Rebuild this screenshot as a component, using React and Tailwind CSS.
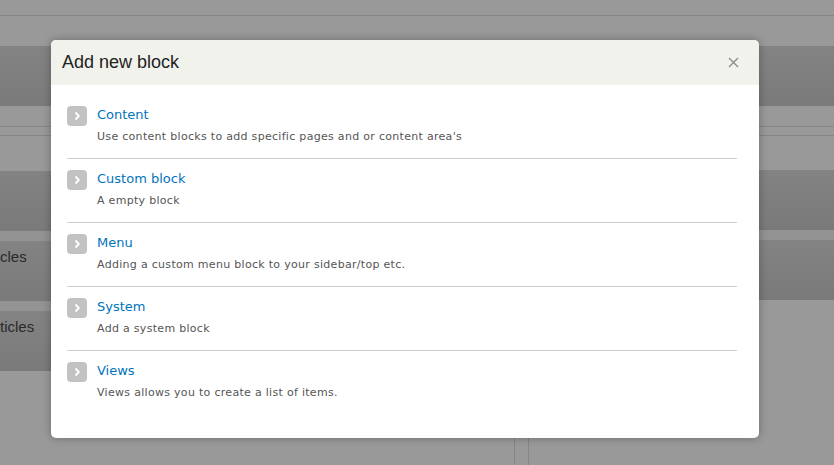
import React from "react";

const items = [
  { title: "Content", desc: "Use content blocks to add specific pages and or content area's" },
  { title: "Custom block", desc: "A empty block" },
  { title: "Menu", desc: "Adding a custom menu block to your sidebar/top etc." },
  { title: "System", desc: "Add a system block" },
  { title: "Views", desc: "Views allows you to create a list of items." },
];

function Chevron() {
  return (
    <div className="w-5 h-5 rounded-[4px] bg-[#c2c2c2] flex items-center justify-center shrink-0">
      <svg width="8" height="10" viewBox="0 0 8 10">
        <path d="M2.5 1.5 L5.8 5 L2.5 8.5" fill="none" stroke="#ffffff" strokeWidth="1.9" />
      </svg>
    </div>
  );
}

export default function App() {
  return (
    <div className="relative w-[834px] h-[465px] overflow-hidden bg-[#999999] font-['Liberation_Sans',Arial,sans-serif]">
      {/* background page */}
      <div className="flex flex-col">
        <div className="h-[16px] border-b border-[#878787]" />
        <div className="h-[30px]" />
        <div className="h-[60px] bg-gradient-to-b from-[#838383] to-[#7a7a7a]" />
        <div className="h-[21px] border-b border-[#868686]" />
        <div className="h-[9px] border-b border-[#868686]" />
        <div className="flex">
          <div className="w-[515px] flex flex-col border-r border-[#868686]">
            <div className="h-[35px]" />
            <div className="h-[60px] bg-gradient-to-b from-[#838383] to-[#7a7a7a]" />
            <div className="h-[10px] bg-[#939393]" />
            <div className="h-[60px] bg-gradient-to-b from-[#838383] to-[#7a7a7a] pt-[5px]">
              <div className="text-[15px] text-[#2a2a2a]">cles</div>
            </div>
            <div className="h-[10px] bg-[#939393]" />
            <div className="h-[60px] bg-gradient-to-b from-[#838383] to-[#7a7a7a] pt-[5px]">
              <div className="text-[15px] text-[#2a2a2a]">ticles</div>
            </div>
            <div className="h-[200px]" />
          </div>
          <div className="w-[13px]" />
          <div className="flex-1 flex flex-col border-l border-[#868686]">
            <div className="h-[34px]" />
            <div className="h-[60px] bg-gradient-to-b from-[#838383] to-[#7a7a7a]" />
            <div className="h-[10px] bg-[#939393]" />
            <div className="h-[60px] bg-gradient-to-b from-[#838383] to-[#7a7a7a]" />
            <div className="h-[200px]" />
          </div>
        </div>
      </div>

      {/* modal */}
      <div className="absolute left-[51px] top-[40px] w-[708px] h-[398px] bg-white rounded-[5px] shadow-[0_0_8px_rgba(0,0,0,0.3)] overflow-hidden flex flex-col">
        <div className="h-[45px] bg-[#f2f2ec] flex items-center justify-between pl-[11px] pr-[20px]">
          <div className="text-[18px] text-[#222222] leading-none -mt-[2px]">Add new block</div>
          <svg width="11" height="11" viewBox="0 0 11 11">
            <path d="M1 1 L10 10 M10 1 L1 10" stroke="#8a8a8a" strokeWidth="1.3" />
          </svg>
        </div>
        <div className="pt-[10px] pl-[16px] pr-[22px] font-['DejaVu_Sans',Verdana,sans-serif]">
          {items.map((it, i) => (
            <div
              key={it.title}
              className={`flex gap-[10px] pt-[11px] pb-[12px] ${i < items.length - 1 ? "border-b border-[#cccccc]" : ""}`}
            >
              <Chevron />
              <div className="flex flex-col gap-[4px]">
                <div className="text-[13px] leading-[18px] text-[#0074bd]">{it.title}</div>
                <div className="text-[11px] leading-[18px] text-[#555555] tracking-[0.3px]">{it.desc}</div>
              </div>
            </div>
          ))}
        </div>
      </div>
    </div>
  );
}
